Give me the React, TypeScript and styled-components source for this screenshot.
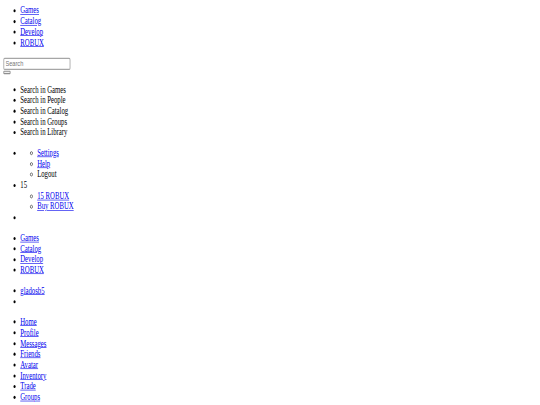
import React from "react";
import styled, { createGlobalStyle } from "styled-components";

// The reference is an unstyled page shot at 1280 wide and squeezed into 540x405,
// so the page is laid out at its natural size and scaled down as one piece.
const GlobalStyle = createGlobalStyle`
	html, body {
		margin: 0;
		padding: 0;
		background: #fff;
		overflow: hidden;
	}
`;

const Page = styled.div`
	width: 1264px;
	padding: 8px;
	font-family: "Liberation Serif", "Times New Roman", serif;
	font-size: 16px;
	line-height: 17.65px;
	color: #000;
	transform: scale(0.421875, 0.609);
	transform-origin: 0 0;
`;

const List = styled.ul<{ $first?: boolean }>`
	margin: ${(p) => (p.$first ? "0 0 16px" : "16px 0")};
	padding-left: 40px;
	list-style: disc;
`;

const SubList = styled.ul`
	margin: 0;
	padding-left: 40px;
	list-style: circle;
`;

const Item = styled.li``;

const Link = styled.a`
	color: #0000ee;
	text-decoration: underline;
	cursor: pointer;
`;

const SearchRow = styled.div`
	display: flex;
	margin-bottom: 1px;
`;

const SearchInput = styled.input`
	box-sizing: border-box;
	width: 159px;
	height: 20px;
	padding: 1px 3px;
	border: 2px solid #a6a6a6;
	border-radius: 3px;
	background: #fff;
	font: 13.333px "Liberation Sans", Arial, sans-serif;
	color: #000;

	&::placeholder {
		color: #757575;
	}
`;

const SearchButton = styled.button`
	display: block;
	box-sizing: border-box;
	width: 17px;
	height: 6px;
	padding: 0;
	border: 2px solid #8f8f8f;
	border-radius: 2px;
	background: #efefef;
`;

const mainLinks = ["Games", "Catalog", "Develop", "ROBUX"];
const searchScopes = ["Games", "People", "Catalog", "Groups", "Library"];
const sideLinks = [
	"Home",
	"Profile",
	"Messages",
	"Friends",
	"Avatar",
	"Inventory",
	"Trade",
	"Groups",
];

export default function App() {
	return (
		<>
			<GlobalStyle />
			<Page>
				<List $first>
					{mainLinks.map((l) => (
						<Item key={l}>
							<Link>{l}</Link>
						</Item>
					))}
				</List>

				<SearchRow>
					<SearchInput type="text" placeholder="Search" />
				</SearchRow>
				<SearchButton type="button" />
				<List>
					{searchScopes.map((s) => (
						<Item key={s}>Search in {s}</Item>
					))}
				</List>

				<List>
					<Item>
						<SubList>
							<Item>
								<Link>Settings</Link>
							</Item>
							<Item>
								<Link>Help</Link>
							</Item>
							<Item>Logout</Item>
						</SubList>
					</Item>
					<Item>
						15
						<SubList>
							<Item>
								<Link>15 ROBUX</Link>
							</Item>
							<Item>
								<Link>Buy ROBUX</Link>
							</Item>
						</SubList>
					</Item>
					<Item />
				</List>

				<List>
					{mainLinks.map((l) => (
						<Item key={l}>
							<Link>{l}</Link>
						</Item>
					))}
				</List>

				<List>
					<Item>
						<Link>gladosb5</Link>
					</Item>
					<Item />
				</List>

				<List>
					{sideLinks.map((l) => (
						<Item key={l}>
							<Link>{l}</Link>
						</Item>
					))}
				</List>
			</Page>
		</>
	);
}
